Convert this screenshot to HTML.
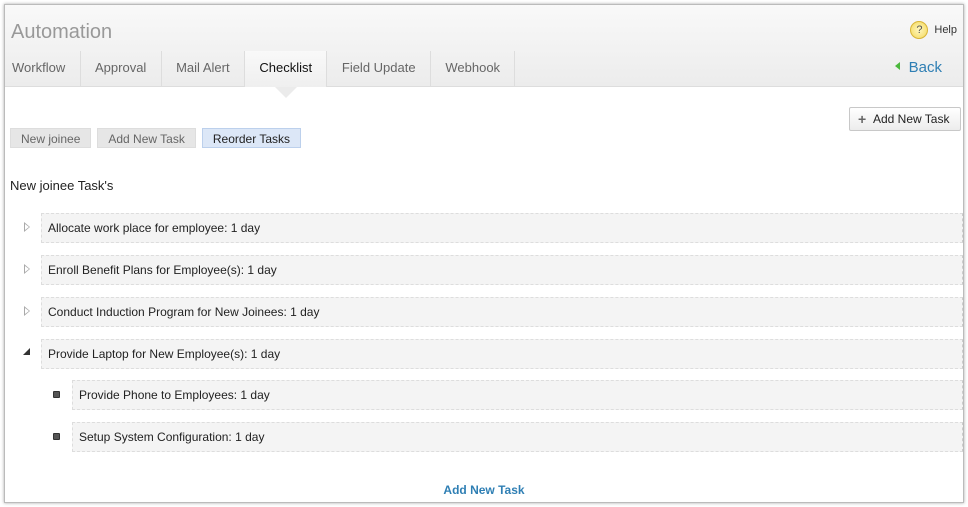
<!DOCTYPE html>
<html><head><style>
*{margin:0;padding:0;box-sizing:border-box}
body{width:968px;height:507px;background:#fff;font-family:"Liberation Sans",sans-serif;position:relative;overflow:hidden}
.frame{position:absolute;left:4px;top:4px;width:960px;height:499px;border:1px solid #bbb;box-shadow:0 0 3px rgba(0,0,0,.35);background:#fff;overflow:hidden}
.hdr{position:absolute;left:0;top:0;width:100%;height:82px;background:linear-gradient(#f9f9f9,#ececec);border-bottom:1px solid #ddd}
.title{position:absolute;left:6px;top:16px;font-size:20px;color:#999}
.help{position:absolute;right:6px;top:16px;font-size:11px;color:#333}
.help i{display:inline-block;width:18px;height:18px;border-radius:50%;border:1px solid #d8b437;background:radial-gradient(#fff7c0,#f3d85a);color:#555;font-style:normal;text-align:center;line-height:16px;font-size:11px;vertical-align:middle;margin-right:6px}
.tabs{position:absolute;left:0;top:46px;height:36px;display:flex}
.tab{padding:0 14.4px;line-height:34px;font-size:13px;color:#666;border-right:1px solid #ddd;position:relative}
.tab:first-child{padding-left:7px}
.tab.act{color:#111;background:linear-gradient(#f9f9f9,#efefef)}
.tab.act:after{content:"";position:absolute;left:50%;bottom:-11px;margin-left:-11px;border:11px solid transparent;border-top:11px solid #ebebeb;border-bottom:0}
.back{position:absolute;right:21px;top:54px;font-size:15px;color:#2f7fb4}
.back:before{content:"";display:inline-block;border:4px solid transparent;border-right:5px solid #4bb83c;border-left:0;margin-right:9px;vertical-align:2px}
.btn{position:absolute;right:2px;top:102px;width:112px;height:24px;border:1px solid #c8c8c8;border-radius:2px;background:linear-gradient(#fff,#ececec);font-size:12px;color:#222;line-height:22px;padding-left:23px}
.btn:before{content:"+";position:absolute;left:8px;top:0;font-weight:bold;color:#666;font-size:14px}
.crumbs{position:absolute;left:5px;top:123px;display:flex;font-size:12px}
.cr{height:20px;line-height:20px;background:#e6e6e6;color:#666;padding:0 10px;margin-right:6px;border:1px solid #ddd}
.cr.act{background:#dce7f7;border-color:#bcd0ec;color:#222}
.h2{position:absolute;left:5px;top:173px;font-size:13px;color:#222}
.row{position:absolute;height:30px;right:0;background:#f4f4f4;border:1px dashed #ddd;border-right:1px dashed #ccc;font-size:12px;color:#222;line-height:28px;padding-left:6px}
.ic{position:absolute}
.tri{border:5px solid transparent;border-left:6px solid #aaa;border-right:0;width:0;height:0}
.tri:after{content:"";position:absolute;left:-5px;top:-3px;border:3px solid transparent;border-left:4px solid #fff;border-right:0}
.sq{width:7px;height:7px;background:#555;border:1px solid #333;border-radius:1px}
</style></head><body>
<div class="frame">
<div class="hdr">
<div class="title">Automation</div>
<div class="help"><i>?</i>Help</div>
<div class="tabs">
<div class="tab">Workflow</div><div class="tab">Approval</div><div class="tab">Mail Alert</div><div class="tab act">Checklist</div><div class="tab">Field Update</div><div class="tab">Webhook</div>
</div>
<div class="back">Back</div>
</div>
<div class="btn">Add New Task</div>
<div class="crumbs"><div class="cr">New joinee</div><div class="cr">Add New Task</div><div class="cr act">Reorder Tasks</div></div>
<div class="h2">New joinee Task's</div>

<div class="ic tri" style="left:19px;top:217px"></div>
<div class="row" style="left:36px;top:208px">Allocate work place for employee: 1 day</div>
<div class="ic tri" style="left:19px;top:259px"></div>
<div class="row" style="left:36px;top:250px">Enroll Benefit Plans for Employee(s): 1 day</div>
<div class="ic tri" style="left:19px;top:301px"></div>
<div class="row" style="left:36px;top:292px">Conduct Induction Program for New Joinees: 1 day</div>
<div class="ic" style="left:18px;top:343px;width:0;height:0;border-left:7px solid transparent;border-bottom:7px solid #333"></div>
<div class="row" style="left:36px;top:334px">Provide Laptop for New Employee(s): 1 day</div>
<div class="ic sq" style="left:48px;top:386px"></div>
<div class="row" style="left:67px;top:375px">Provide Phone to Employees: 1 day</div>
<div class="ic sq" style="left:48px;top:428px"></div>
<div class="row" style="left:67px;top:417px">Setup System Configuration: 1 day</div>

<div style="position:absolute;left:0;width:100%;top:478px;text-align:center;font-size:12px;font-weight:bold;color:#2f7fb4">Add New Task</div>
</div>
</body></html>
